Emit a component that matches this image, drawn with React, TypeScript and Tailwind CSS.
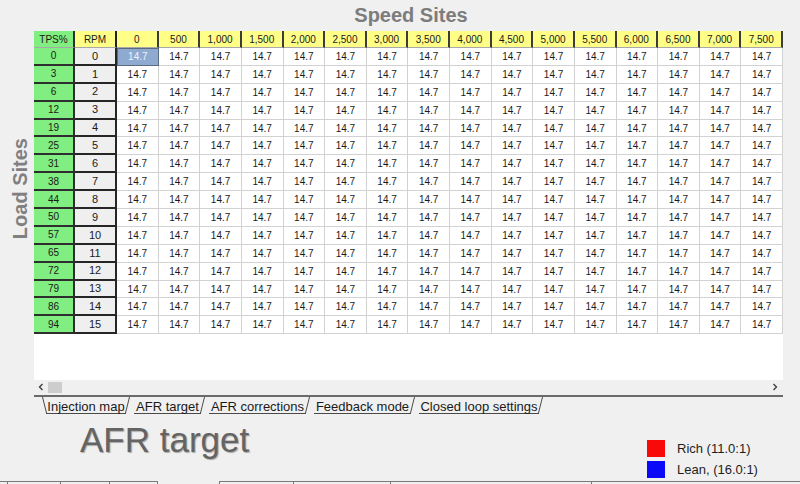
import React from "react";

const speeds = ["0","500","1,000","1,500","2,000","2,500","3,000","3,500","4,000","4,500","5,000","5,500","6,000","6,500","7,000","7,500"];
const tps = [0,3,6,12,19,25,31,38,44,50,57,65,72,79,86,94];

const tabs = [
  { label: "Injection map", w: 88, first: true },
  { label: "AFR target", w: 75 },
  { label: "AFR corrections", w: 105 },
  { label: "Feedback mode", w: 105 },
  { label: "Closed loop settings", w: 128 },
];

function Tab({ label, w, first }: { label: string; w: number; first?: boolean }) {
  return (
    <div className="relative flex h-[17px] items-center justify-center text-[13px] leading-[15px] text-[#1a1a1a]" style={{ width: w }}>
      <svg className="absolute left-0 top-0" width={w} height={17} viewBox={`0 0 ${w} 17`}>
        {first && <path d="M0.5 0 L4.5 16" stroke="#4a4a4a" strokeWidth="1" fill="none" />}
        <path d={`M4 16.5 L${w - 4} 16.5`} stroke="#4a4a4a" strokeWidth="1" fill="none" />
        <path d={`M${w - 4.5} 16 L${w - 0.5} 0`} stroke="#4a4a4a" strokeWidth="1" fill="none" />
      </svg>
      <span className="relative mt-[1px]">{label}</span>
    </div>
  );
}

export default function App() {
  return (
    <div className="relative h-[484px] w-[800px] overflow-hidden bg-[#f0f0f0] font-['Liberation_Sans',Arial,sans-serif]">
      {/* title */}
      <div className="flex h-[31px] justify-center pl-[22px]">
        <div className="mt-[5px] text-[20px] font-bold leading-[20px] text-[#7c7c7c]">Speed Sites</div>
      </div>

      <div className="flex h-[383px]">
        {/* load sites */}
        <div className="w-[34px] pl-[10px] pt-[107px]">
          <div className="rotate-180 text-[20px] font-bold leading-[20px] text-[#808080] [writing-mode:vertical-rl]">Load Sites</div>
        </div>

        <div className="flex w-[749px] flex-col">
          {/* table panel */}
          <div className="h-[349px] bg-white">
            <div className="grid grid-cols-[41px_42px_repeat(16,41.625px)] grid-rows-[17px_repeat(16,17.9px)] text-[10px] text-[#1a1a1a]">
              <div className="flex items-center justify-center border-b border-r-2 border-b-[#a8a8a8] border-r-[#2e2e2e] bg-[#80ee80]">TPS%</div>
              <div className="flex items-center justify-center border-b border-r-2 border-b-[#a8a8a8] border-r-[#222] bg-[#ffff88]">RPM</div>
              {speeds.map((s) => (
                <div key={s} className="flex items-center justify-center border-b border-r-2 border-b-[#a8a8a8] border-r-[#3c3c3c] bg-[#ffff88]">
                  {s}
                </div>
              ))}
              {tps.map((t, r) => (
                <React.Fragment key={r}>
                  <div className="flex items-center justify-center border-b-2 border-r-2 border-[#2e2e2e] bg-[#80ee80]">{t}</div>
                  <div className="flex items-center justify-center border-b-2 border-r-2 border-[#262626] bg-[#efefef] text-[11px]">{r}</div>
                  {speeds.map((s, c) =>
                    r === 0 && c === 0 ? (
                      <div key={s} className="flex items-center justify-center border border-[#5c6a80] bg-[#8faad0] text-[#eef2fa]">14.7</div>
                    ) : (
                      <div key={s} className="flex items-center justify-center border-b border-r border-[#d2d2d2] bg-white">14.7</div>
                    )
                  )}
                </React.Fragment>
              ))}
            </div>
          </div>

          {/* horizontal scrollbar */}
          <div className="flex h-[13px] items-center pl-[4px]">
            <svg width="6" height="8" viewBox="0 0 6 8">
              <path d="M4.5 1 L1.5 4 L4.5 7" stroke="#3a3a3a" strokeWidth="1.3" fill="none" />
            </svg>
            <div className="ml-[4px] mt-[2px] h-[11px] w-[14px] bg-[#cdcdcd]" />
            <div className="flex-1" />
            <svg width="6" height="8" viewBox="0 0 6 8">
              <path d="M1.5 1 L4.5 4 L1.5 7" stroke="#3a3a3a" strokeWidth="1.3" fill="none" />
            </svg>
            <div className="w-[5px]" />
          </div>

          <div className="mt-[2px] h-[2px] bg-[#6a6a6a]" />

          {/* tabs */}
          <div className="flex h-[17px] pl-[8px]">
            {tabs.map((t) => (
              <Tab key={t.label} label={t.label} w={t.w} first={t.first} />
            ))}
          </div>
        </div>
      </div>

      {/* bottom area */}
      <div className="flex h-[67px]">
        <div className="w-[647px] pl-[80px] pt-[8px]">
          <div className="text-[35px] leading-[35px] text-[#646464] [text-shadow:1px_1px_1px_#a8a8a8]">AFR target</div>
        </div>
        <div className="flex flex-col gap-[4px] pt-[26px]">
          <div className="flex h-[17px] items-center">
            <div className="h-[17px] w-[18px] bg-[#f80a0a]" />
            <span className="ml-[12px] text-[13px] text-[#1e1e1e]">Rich (11.0:1)</span>
          </div>
          <div className="flex h-[17px] items-center">
            <div className="h-[17px] w-[18px] bg-[#0a0af8]" />
            <span className="ml-[12px] text-[13px] text-[#1e1e1e]">Lean, (16.0:1)</span>
          </div>
        </div>
      </div>

      {/* bottom status bar edge */}
      <div className="flex h-[3px]">
        <div className="w-[7px] border-t border-[#7a7a7a]" />
        <div className="w-[53px] border-l border-t border-[#7a7a7a]" />
        <div className="w-[49px] border-l border-t border-[#7a7a7a]" />
        <div className="w-[48px] border-l border-t border-[#7a7a7a]" />
        <div className="w-[62px] border-l border-[#7a7a7a]" />
        <div className="w-[74px] border-l border-t border-[#7a7a7a]" />
        <div className="w-[97px] border-l border-t border-[#7a7a7a]" />
        <div className="w-[201px] border-l border-t border-[#7a7a7a]" />
        <div className="flex-1 border-l border-t border-[#7a7a7a]" />
      </div>
    </div>
  );
}
